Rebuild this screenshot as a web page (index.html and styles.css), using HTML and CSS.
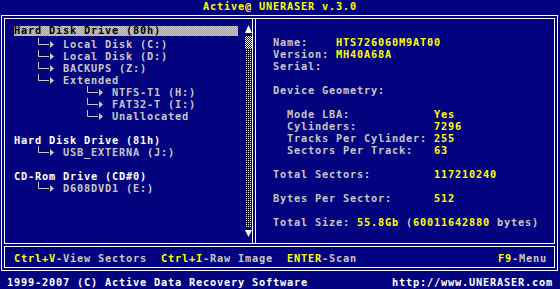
FILE: index.html
```html
<!DOCTYPE html>
<html lang="en">
<head>
    <meta charset="UTF-8">
    <title>Active@ UNERASER v.3.0</title>
    <link rel="stylesheet" href="styles.css">
</head>
<body>

<div class="row title">Active@ UNERASER v.3.0</div>

<div class="frame">
    <div class="panes">
        <div class="tree-pane">
            <div class="tree">
                <div class="row"><div class="hl">Hard Disk Drive (80h)</div></div>
                <div class="row">   <svg class="conn" width="21" height="12"><path d="M3.5 0V6.5H14" /><polygon points="15,3 19,6.5 15,10" /></svg> Local Disk (C:)</div>
                <div class="row">   <svg class="conn" width="21" height="12"><path d="M3.5 0V6.5H14" /><polygon points="15,3 19,6.5 15,10" /></svg> Local Disk (D:)</div>
                <div class="row">   <svg class="conn" width="21" height="12"><path d="M3.5 0V6.5H14" /><polygon points="15,3 19,6.5 15,10" /></svg> BACKUPS (Z:)</div>
                <div class="row">   <svg class="conn" width="21" height="12"><path d="M3.5 0V6.5H14" /><polygon points="15,3 19,6.5 15,10" /></svg> Extended</div>
                <div class="row">          <svg class="conn" width="21" height="12"><path d="M3.5 0V6.5H14" /><polygon points="15,3 19,6.5 15,10" /></svg> NTFS-T1 (H:)</div>
                <div class="row">          <svg class="conn" width="21" height="12"><path d="M3.5 0V6.5H14" /><polygon points="15,3 19,6.5 15,10" /></svg> FAT32-T (I:)</div>
                <div class="row">          <svg class="conn" width="21" height="12"><path d="M3.5 0V6.5H14" /><polygon points="15,3 19,6.5 15,10" /></svg> Unallocated</div>
                <div class="row"></div>
                <div class="row head">Hard Disk Drive (81h)</div>
                <div class="row">   <svg class="conn" width="21" height="12"><path d="M3.5 0V6.5H14" /><polygon points="15,3 19,6.5 15,10" /></svg> USB_EXTERNA (J:)</div>
                <div class="row"></div>
                <div class="row head">CD-Rom Drive (CD#0)</div>
                <div class="row">   <svg class="conn" width="21" height="12"><path d="M3.5 0V6.5H14" /><polygon points="15,3 19,6.5 15,10" /></svg> D608DVD1 (E:)</div>
            </div>
            <div class="scroll">
                <div class="row"><svg width="7" height="12"><polygon points="3.5,1 7,9 0,9" fill="#fff"/></svg></div>
                <div class="thumb"></div>
                <div class="track"></div>
                <div class="row"><svg width="7" height="12"><polygon points="0,2 7,2 3.5,9" fill="#fff"/></svg></div>
            </div>
        </div>

        <div class="info-pane">
            <div class="row"></div>
            <div class="row">Name:    <span class="val">HTS726060M9AT00</span></div>
            <div class="row">Version: <span class="val">MH40A68A</span></div>
            <div class="row">Serial:</div>
            <div class="row"></div>
            <div class="row">Device Geometry:</div>
            <div class="row"></div>
            <div class="row">  Mode LBA:            <span class="val">Yes</span></div>
            <div class="row">  Cylinders:           <span class="val">7296</span></div>
            <div class="row">  Tracks Per Cylinder: <span class="val">255</span></div>
            <div class="row">  Sectors Per Track:   <span class="val">63</span></div>
            <div class="row"></div>
            <div class="row">Total Sectors:         <span class="val">117210240</span></div>
            <div class="row"></div>
            <div class="row">Bytes Per Sector:      <span class="val">512</span></div>
            <div class="row"></div>
            <div class="row">Total Size: <span class="val">55.8Gb</span> (<span class="val">60011642880</span> bytes)</div>
        </div>
    </div>

    <div class="status">
        <div class="row"><span class="val">Ctrl+V</span>-View Sectors  <span class="val">Ctrl+I</span>-Raw Image  <span class="val">ENTER</span>-Scan</div>
        <div class="row"><span class="val">F9</span>-Menu</div>
    </div>
</div>

<div class="footer">
    <div class="row">1999-2007 (C) Active Data Recovery Software</div>
    <div class="row">http://www.UNERASER.com</div>
</div>

</body>
</html>
```

FILE: styles.css
```css
body {
    margin: 0;
    width: 560px;
    height: 289px;
    overflow: hidden;
    background: repeating-conic-gradient(#0000a4 0 25%, #00007c 0 50%) 0 0 / 2px 2px;
    font-family: "DejaVu Sans Mono", monospace;
    font-size: 10.3px;
    letter-spacing: 0.8px;
    font-weight: bold;
    line-height: 12px;
    color: #c8c8c8;
}
.row {
    height: 12px;
    white-space: pre;
}
.title {
    text-align: center;
    color: #ffff00;
}
.val {
    color: #ffff00;
}
.head {
    color: #fff;
}
.conn {
    vertical-align: top;
}
.conn path {
    fill: none;
    stroke: #c8c8c8;
    stroke-width: 1;
}
.conn polygon {
    fill: #c8c8c8;
}
.frame {
    margin: 3px 2px 0 1px;
    border: 1px solid #fff;
    padding: 2px;
}
.panes {
    display: flex;
    border: 1px solid #fff;
}
.tree-pane {
    width: 247px;
    display: flex;
    padding: 5px 0 3px;
    border-right: 1px solid #fff;
}
.tree {
    width: 240px;
    padding-left: 9px;
    box-sizing: border-box;
}
.hl {
    width: 224px;
    height: 10px;
    margin-top: 2px;
    line-height: 8px;
    color: #000;
    background: repeating-conic-gradient(#c8c8c8 0 25%, #a4a4a4 0 50%) 0 0 / 2px 2px;
}
.scroll {
    width: 7px;
}
.thumb {
    height: 12px;
    background: repeating-conic-gradient(#fff 0 25%, transparent 0 50%) 0 0 / 2px 2px;
}
.track {
    height: 180px;
    background: conic-gradient(#fff 0 25%, transparent 0 100%) 0 0 / 2px 2px;
}
.info-pane {
    flex: 1;
    margin-left: 2px;
    padding: 5px 0 3px 17px;
    border-left: 1px solid #fff;
}
.status {
    display: flex;
    justify-content: space-between;
    margin-top: 2px;
    padding: 5px 7px 3px 9px;
    border: 1px solid #fff;
}
.footer {
    display: flex;
    justify-content: space-between;
    margin-top: 5px;
    padding: 0 7px;
    color: #fff;
}
```
